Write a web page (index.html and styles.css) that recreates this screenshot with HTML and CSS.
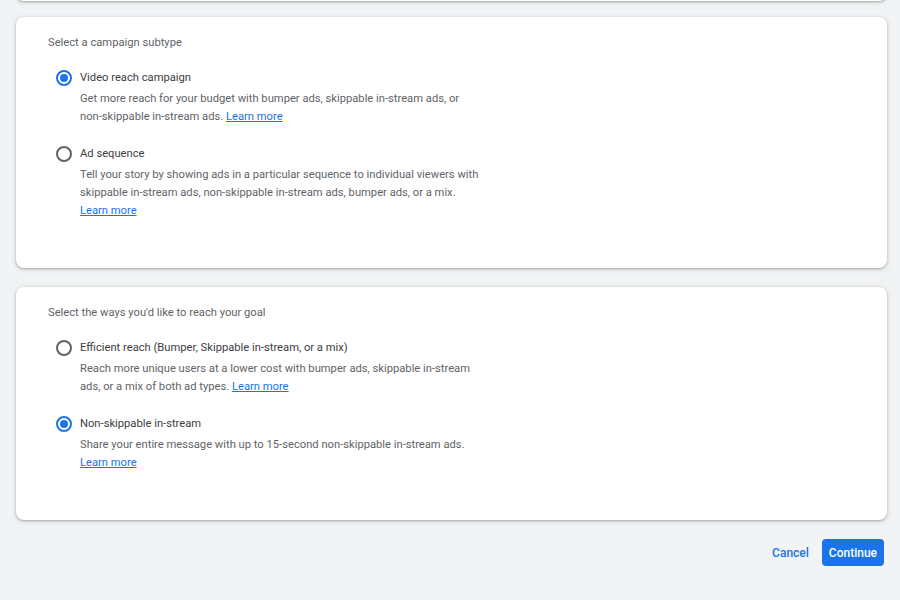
FILE: index.html
```html
<!DOCTYPE html>
<html lang="en">
<head>
  <meta charset="UTF-8">
  <title>Campaign subtype</title>
  <link rel="stylesheet" href="styles.css">
</head>
<body>

<div class="page">
  <!-- end of the step above -->
  <div class="card card-prev"></div>

  <!-- Campaign subtype -->
  <div class="card">
    <div class="card-title">Select a campaign subtype</div>
    <div class="options">
      <label class="option">
        <span class="radio checked"></span>
        <span class="option-body">
          <span class="option-label">Video reach campaign</span>
          <span class="option-desc">Get more reach for your budget with bumper ads, skippable in-stream ads, or<br>non-skippable in-stream ads. <a href="#">Learn more</a></span>
        </span>
      </label>
      <label class="option">
        <span class="radio"></span>
        <span class="option-body">
          <span class="option-label">Ad sequence</span>
          <span class="option-desc">Tell your story by showing ads in a particular sequence to individual viewers with<br>skippable in-stream ads, non-skippable in-stream ads, bumper ads, or a mix.<br><a href="#">Learn more</a></span>
        </span>
      </label>
    </div>
  </div>

  <!-- Reach goal -->
  <div class="card">
    <div class="card-title">Select the ways you'd like to reach your goal</div>
    <div class="options">
      <label class="option">
        <span class="radio"></span>
        <span class="option-body">
          <span class="option-label">Efficient reach (Bumper, Skippable in-stream, or a mix)</span>
          <span class="option-desc">Reach more unique users at a lower cost with bumper ads, skippable in-stream<br>ads, or a mix of both ad types. <a href="#">Learn more</a></span>
        </span>
      </label>
      <label class="option">
        <span class="radio checked"></span>
        <span class="option-body">
          <span class="option-label">Non-skippable in-stream</span>
          <span class="option-desc">Share your entire message with up to 15-second non-skippable in-stream ads.<br><a href="#">Learn more</a></span>
        </span>
      </label>
    </div>
  </div>

  <div class="actions">
    <button class="btn-text">Cancel</button>
    <button class="btn-primary">Continue</button>
  </div>
</div>

</body>
</html>
```

FILE: styles.css
```css
* {
  margin: 0;
  padding: 0;
  box-sizing: border-box;
}
html, body {
  background: #f1f3f4;
  font-family: Roboto, "Liberation Sans", Arial, sans-serif;
  color: #3c4043;
}

.page {
  padding: 0 13px 0 16px;
}

/* cards */
.card {
  background: #fff;
  border-radius: 8px;
  box-shadow: 0 1px 2px rgba(60, 64, 67, 0.3), 0 1px 4px 1px rgba(60, 64, 67, 0.15);
  padding: 18px 32px 48px;
  margin-bottom: 19px;
}
.card-prev {
  height: 40px;
  margin-top: -39px;
  margin-bottom: 16px;
  padding: 0;
}

.card-title {
  font-size: 11.2px;
  line-height: 16px;
  color: #5f6368;
}

/* radio options */
.options {
  margin-top: 17px;
  padding-left: 8px;
  display: flex;
  flex-direction: column;
  gap: 18px;
}
.option {
  display: flex;
  gap: 8px;
  cursor: pointer;
}
.radio {
  flex: none;
  width: 16px;
  height: 16px;
  margin-top: 2px;
  border: 2px solid #5f6368;
  border-radius: 50%;
  position: relative;
}
.radio.checked {
  border-color: #1a73e8;
}
.radio.checked::after {
  content: "";
  position: absolute;
  inset: 2px;
  border-radius: 50%;
  background: #1a73e8;
}
.option-body {
  display: flex;
  flex-direction: column;
}
.option-label {
  font-size: 11.2px;
  line-height: 20px;
  color: #3c4043;
}
.option-desc {
  margin-top: 2px;
  font-size: 11.2px;
  line-height: 18px;
  color: #5f6368;
}
.option-desc a {
  color: #1a73e8;
  text-decoration: underline;
}

/* footer buttons */
.actions {
  display: flex;
  justify-content: flex-end;
  align-items: center;
  gap: 13px;
  padding-right: 3px;
}
.btn-text,
.btn-primary {
  font-family: Roboto, "Liberation Sans", Arial, sans-serif;
  font-size: 12px;
  font-weight: 500;
  border: none;
  border-radius: 4px;
  height: 27px;
  cursor: pointer;
}
.btn-text {
  background: none;
  color: #1a73e8;
  padding: 0;
}
.btn-primary {
  background: #1a73e8;
  color: #fff;
  padding: 0 7px;
  min-width: 61px;
}
```
